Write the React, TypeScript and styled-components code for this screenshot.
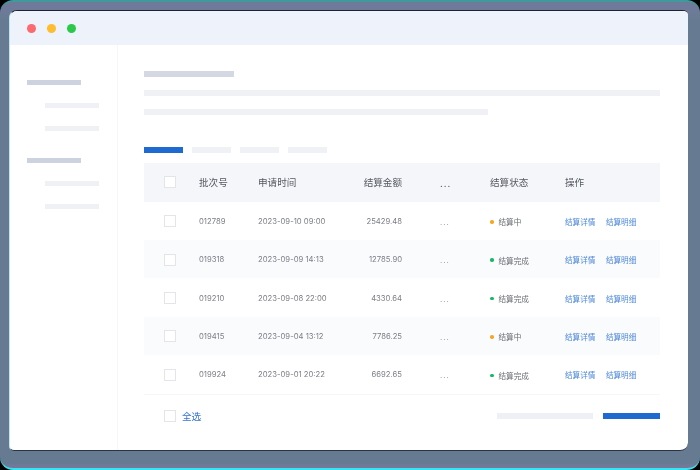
import React from 'react'
import styled, { createGlobalStyle } from 'styled-components'

const GlobalStyle = createGlobalStyle`
  html, body {
    margin: 0;
    padding: 0;
    background: #000;
  }
  body {
    width: 700px;
    height: 470px;
    overflow: hidden;
    font-family: "Inter", "Noto Sans CJK SC", sans-serif;
  }
`

const Frame = styled.div`
  box-sizing: border-box;
  width: 700px;
  height: 470px;
  padding: 8px 12px 17px 9px;
  background: linear-gradient(
    #6f7a9a 0,
    #6f7a9a 8px,
    #667b91 18px,
    #667b91 calc(100% - 5px),
    #75789a calc(100% - 2px)
  );
  border-top: 2px solid #3f9a9c;
  border-bottom: 2px solid #35e6f2;
  border-radius: 13px;
`

const Window = styled.div`
  display: flex;
  flex-direction: column;
  height: 100%;
  background: #fff;
  border-top: 1px solid #1c2430;
  border-bottom: 1px solid #2a3442;
  border-left: 1px solid #bfe4f4;
  box-sizing: border-box;
  border-radius: 8px 5px 8px 5px;
  overflow: hidden;
  filter: blur(0.4px);
`

const TitleBar = styled.div`
  display: flex;
  align-items: center;
  gap: 11px;
  flex: none;
  height: 34px;
  padding-left: 17px;
  background: #eef2fb;
`

const Light = styled.span<{ $color: string }>`
  width: 9px;
  height: 9px;
  border-radius: 50%;
  background: ${p => p.$color};
`

const Body = styled.div`
  display: flex;
  flex: 1;
  min-height: 0;
`

const Sidebar = styled.aside`
  box-sizing: border-box;
  flex: none;
  width: 108px;
  padding: 35px 0 0 17px;
  border-right: 1px solid #f6f7f9;
`

const NavGroup = styled.div`
  display: flex;
  flex-direction: column;
  margin-bottom: 27px;
`

const NavTitle = styled.div`
  width: 54px;
  height: 5px;
  background: #ccd2de;
`

const NavItem = styled.div`
  width: 54px;
  height: 5px;
  margin: 18px 0 0 18px;
  background: #eff1f5;
`

const Main = styled.main`
  flex: 1;
  min-width: 0;
  padding: 26px 28px 0 26px;
`

const Heading = styled.div`
  width: 90px;
  height: 6px;
  background: #d3d8e3;
`

const Line = styled.div<{ $width: number }>`
  width: ${p => p.$width}px;
  height: 6px;
  margin-top: 13px;
  background: #eff1f5;
`

const Tabs = styled.div`
  display: flex;
  gap: 9px;
  margin-top: 32px;
`

const Tab = styled.div<{ $active?: boolean }>`
  width: 39px;
  height: 6px;
  background: ${p => (p.$active ? '#1f6ad0' : '#eff1f5')};
`

const Table = styled.div`
  margin-top: 10px;
`

const Row = styled.div<{ $head?: boolean; $striped?: boolean }>`
  box-sizing: border-box;
  display: grid;
  grid-template-columns: 35px 59px 90px 54px 88px 75px 1fr;
  align-items: center;
  height: ${p => (p.$head ? '38.6px' : '38.4px')};
  padding: ${p => (p.$head ? '0 0 0 20px' : '1px 0 0 20px')};
  background: ${p => (p.$head ? '#f4f6fa' : p.$striped ? '#fafbfc' : '#fff')};
  color: ${p => (p.$head ? '#55585f' : '#7b7e85')};
  font-size: ${p => (p.$head ? '9.6px' : '7.7px')};
`

const Check = styled.span`
  display: block;
  box-sizing: border-box;
  width: 12px;
  height: 12px;
  background: #fff;
  border: 1px solid #e3e5ea;
`

const Amount = styled.span`
  text-align: right;
`

const Dots = styled.span`
  padding: 2px 0 0 38px;
  letter-spacing: 1px;
`

const Status = styled.span`
  display: flex;
  align-items: center;
  gap: 5px;
  padding-top: 1px;
  font-size: 7.6px;
  color: #6a6d73;
`

const Dot = styled.i<{ $color: string }>`
  width: 3.5px;
  height: 3.5px;
  border-radius: 50%;
  background: ${p => p.$color};
`

const Actions = styled.span`
  display: flex;
  gap: 10.5px;
`

const ActionLink = styled.a`
  color: #4c87d9;
  font-size: 7.6px;
`

const Footer = styled.div`
  display: flex;
  align-items: center;
  height: 43px;
  padding-left: 20px;
  border-top: 1px solid #f6f7f9;
`

const SelectAll = styled.a`
  margin-left: 6px;
  color: #3574d4;
  font-size: 9.6px;
`

const Pager = styled.div<{ $primary?: boolean }>`
  width: ${p => (p.$primary ? '57px' : '96px')};
  height: 6px;
  margin-left: ${p => (p.$primary ? '10px' : 'auto')};
  background: ${p => (p.$primary ? '#1f6ad0' : '#eff0f5')};
`

const GREEN = '#16b866'
const ORANGE = '#f5a623'

const rows = [
  { id: '012789', time: '2023-09-10 09:00', amount: '25429.48', status: '结算中', color: ORANGE },
  { id: '019318', time: '2023-09-09 14:13', amount: '12785.90', status: '结算完成', color: GREEN },
  { id: '019210', time: '2023-09-08 22:00', amount: '4330.64', status: '结算完成', color: GREEN },
  { id: '019415', time: '2023-09-04 13:12', amount: '7786.25', status: '结算中', color: ORANGE },
  { id: '019924', time: '2023-09-01 20:22', amount: '6692.65', status: '结算完成', color: GREEN },
]

const App: React.FC = () => {
  return (
    <Frame>
      <GlobalStyle />
      <Window>
        <TitleBar>
          <Light $color="#fb6a6f" />
          <Light $color="#fdbd2e" />
          <Light $color="#2cc84a" />
        </TitleBar>
        <Body>
          <Sidebar>
            <NavGroup>
              <NavTitle />
              <NavItem />
              <NavItem />
            </NavGroup>
            <NavGroup>
              <NavTitle />
              <NavItem />
              <NavItem />
            </NavGroup>
          </Sidebar>
          <Main>
            <Heading />
            <Line $width={516} />
            <Line $width={344} />
            <Tabs>
              <Tab $active />
              <Tab />
              <Tab />
              <Tab />
            </Tabs>
            <Table>
              <Row $head>
                <Check />
                <span>批次号</span>
                <span>申请时间</span>
                <Amount>结算金额</Amount>
                <Dots>...</Dots>
                <span>结算状态</span>
                <span>操作</span>
              </Row>
              {rows.map((row, i) => (
                <Row key={row.id} $striped={i % 2 === 1}>
                  <Check />
                  <span>{row.id}</span>
                  <span>{row.time}</span>
                  <Amount>{row.amount}</Amount>
                  <Dots>...</Dots>
                  <Status>
                    <Dot $color={row.color} />
                    {row.status}
                  </Status>
                  <Actions>
                    <ActionLink>结算详情</ActionLink>
                    <ActionLink>结算明细</ActionLink>
                  </Actions>
                </Row>
              ))}
              <Footer>
                <Check />
                <SelectAll>全选</SelectAll>
                <Pager />
                <Pager $primary />
              </Footer>
            </Table>
          </Main>
        </Body>
      </Window>
    </Frame>
  )
}

export default App
